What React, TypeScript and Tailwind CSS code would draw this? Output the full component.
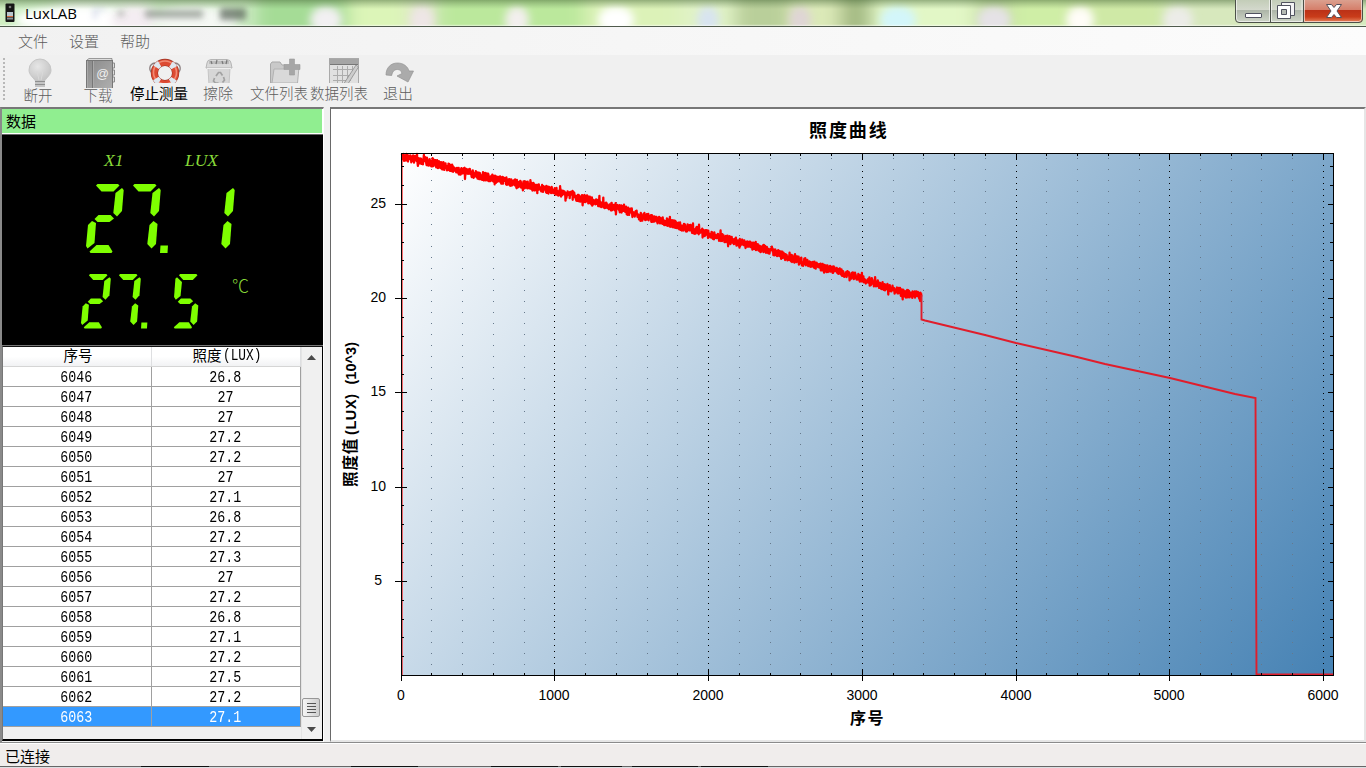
import React from "react";

const CJK = "font-['Liberation_Sans','Noto_Sans_CJK_SC',sans-serif]";

/* ---------- Title bar ---------- */

type Blob = { x: number; w: number; c: string };

const GLASS_BANDS: Blob[] = [
  { x: 0, w: 60, c: "#cdeec3" },
  { x: 60, w: 110, c: "#e4f4df" },
  { x: 150, w: 105, c: "#cfecc6" },
  { x: 255, w: 100, c: "#a5dc96" },
  { x: 348, w: 60, c: "#dcf5b8" },
  { x: 408, w: 32, c: "#dfe6c8" },
  { x: 436, w: 150, c: "#bbe89c" },
  { x: 585, w: 100, c: "#dcf2b8" },
  { x: 680, w: 60, c: "#e0f2c6" },
  { x: 735, w: 55, c: "#b9cf9a" },
  { x: 790, w: 55, c: "#dbe9b8" },
  { x: 840, w: 35, c: "#a5bb84" },
  { x: 872, w: 110, c: "#e2f7c6" },
  { x: 975, w: 40, c: "#c8dfa6" },
  { x: 1012, w: 55, c: "#cfeea6" },
  { x: 1067, w: 100, c: "#cfe9a6" },
  { x: 1165, w: 201, c: "#d7e8bd" },
];

const GLASS_SPOTS: Blob[] = [
  { x: 75, w: 60, c: "#ffffff" },
  { x: 135, w: 24, c: "#f4edf2" },
  { x: 195, w: 44, c: "#f5f8f4" },
  { x: 326, w: 16, c: "#f2f0f2" },
  { x: 422, w: 12, c: "#eee6e6" },
  { x: 517, w: 12, c: "#f3efee" },
  { x: 616, w: 18, c: "#ffffff" },
  { x: 708, w: 11, c: "#d8e4f0" },
  { x: 800, w: 11, c: "#dfd5d5" },
  { x: 898, w: 18, c: "#d3f6fa" },
  { x: 994, w: 17, c: "#e5e2e6" },
  { x: 1080, w: 14, c: "#fffdf8" },
  { x: 1178, w: 15, c: "#ecece8" },
];

function GlassBackdrop() {
  return (
    <svg className="absolute inset-0" width="1366" height="26" viewBox="0 0 1366 26">
      <defs>
        <filter id="soft" x="-5%" y="-100%" width="110%" height="300%">
          <feGaussianBlur stdDeviation="9 2" />
        </filter>
        <filter id="spot" x="-50%" y="-50%" width="200%" height="200%">
          <feGaussianBlur stdDeviation="4" />
        </filter>
        <filter id="ghost" x="-20%" y="-50%" width="140%" height="200%">
          <feGaussianBlur stdDeviation="3" />
        </filter>
        <linearGradient id="shade" x1="0" y1="0" x2="0" y2="1">
          <stop offset="0" stopColor="#4a6a3a" stopOpacity="0.5" />
          <stop offset="0.35" stopColor="#6a8a5a" stopOpacity="0" />
          <stop offset="0.93" stopColor="#ffffff" stopOpacity="0" />
          <stop offset="1" stopColor="#ffffff" stopOpacity="0.6" />
        </linearGradient>
      </defs>
      <rect width="1366" height="26" fill="#d4edc0" />
      <g filter="url(#soft)">
        {GLASS_BANDS.map((b) => (
          <rect key={b.x} x={b.x} y={-8} width={b.w} height={42} fill={b.c} />
        ))}
      </g>
      <g filter="url(#spot)">
        {GLASS_SPOTS.map((b) => (
          <ellipse key={b.x} cx={b.x} cy={20} rx={b.w} ry={14} fill={b.c} />
        ))}
      </g>
      <g filter="url(#ghost)" fill="#555f55">
        <path d="M93 8h12v3h-8v8h-4z" opacity="0.3" fill="#8090c0" />
        <rect x="118" y="11" width="6" height="5" opacity="0.45" />
        <rect x="145" y="10" width="58" height="8" opacity="0.5" />
        <rect x="220" y="8" width="26" height="12" opacity="0.7" />
      </g>
      <rect width="1366" height="26" fill="url(#shade)" />
    </svg>
  );
}

function WindowButtons() {
  return (
    <svg className="absolute left-[1235px] top-0" width="129" height="24" viewBox="0 0 129 24">
      <defs>
        <linearGradient id="btn" x1="0" y1="0" x2="0" y2="1">
          <stop offset="0" stopColor="#c3cdb8" />
          <stop offset="0.43" stopColor="#d3d8cc" />
          <stop offset="0.46" stopColor="#adb5a8" />
          <stop offset="1" stopColor="#cfd6c8" />
        </linearGradient>
        <linearGradient id="cls" x1="0" y1="0" x2="0" y2="1">
          <stop offset="0" stopColor="#dba08f" />
          <stop offset="0.43" stopColor="#d57e6a" />
          <stop offset="0.46" stopColor="#bb3117" />
          <stop offset="0.75" stopColor="#c93c1a" />
          <stop offset="1" stopColor="#e88a62" />
        </linearGradient>
      </defs>
      <path d="M.5 0V19q0 3.500 3.500 3.500H124q3.500 0 3.500-3.500V0z" fill="url(#btn)" />
      <path d="M68 0V22.500H124q3.500 0 3.500-3.500V0z" fill="url(#cls)" />
      <path d="M1.500 0V18.500q0 3 3 3H34.500V0M36.500 0V21.500H67V0M69.500 0V21.500H123.500q3 0 3-3V0" fill="none" stroke="#fff" strokeOpacity="0.6" />
      <path d="M.5 0V19q0 3.500 3.500 3.500H124q3.500 0 3.500-3.500V0M35.500 0V22M68.500 0V22" fill="none" stroke="#4c5149" />
      <rect x="10.500" y="13.500" width="16" height="4" rx="0.500" fill="#fff" stroke="#50525f" />
      <path d="M46.500 2.500h13v13h-13z" fill="#f4f4f4" stroke="#50525f" />
      <path d="M42.500 5.500h13v13h-13z" fill="#fff" stroke="#50525f" />
      <path d="M46.500 9.500h5v5h-5z" fill="#b5bab4" stroke="#50525f" />
      <path d="M91.500 4.500h5l2.500 3 2.500-3h5l-4.500 6.500 4.500 6.500h-5l-2.500-3-2.500 3h-5l4.500-6.500z" fill="#fff" stroke="#55505a" />
    </svg>
  );
}

function TitleBar() {
  return (
    <header className="relative flex h-[27px] shrink-0 items-center overflow-hidden border-b border-[#4f5a4c]">
      <GlassBackdrop />
      <svg className="relative ml-[5px]" width="11" height="20" viewBox="0 0 11 20">
        <rect x="0.500" y="0.500" width="9" height="18.500" rx="1" fill="#161616" />
        <circle cx="5" cy="4" r="1.300" fill="#777" />
        <rect x="2" y="9" width="6" height="4" fill="#b9c6cd" />
        <rect x="2" y="13" width="6" height="1" fill="#d5683c" />
        <rect x="2" y="14.500" width="6" height="2" fill="#8a9298" />
      </svg>
      <span className="relative ml-[9px] text-[15px] text-black font-['Open_Sans','Noto_Sans',sans-serif]">LuxLAB</span>
      <WindowButtons />
    </header>
  );
}

/* ---------- Toolbar ---------- */

function BulbIcon() {
  return (
    <svg width="24" height="30" viewBox="0 0 24 30">
      <defs>
        <radialGradient id="bulb" cx="0.4" cy="0.35" r="0.7">
          <stop offset="0" stopColor="#e6e6e6" />
          <stop offset="1" stopColor="#c3c3c3" />
        </radialGradient>
      </defs>
      <path d="M12 1a11 11 0 0 0-11 11c0 5 4 7 6 10.500h10C19 19 23 17 23 12A11 11 0 0 0 12 1z" fill="url(#bulb)" stroke="#c6c6c6" />
      <path d="M7 22h10v7H7z" fill="#c4c4c4" />
      <path d="M7 23.500h10M7 26.500h10" stroke="#8f8f8f" />
      <path d="M9 13l2 9M15 13l-2 9" stroke="#d9d9d9" fill="none" />
    </svg>
  );
}

function BookIcon() {
  return (
    <svg width="30" height="30" viewBox="0 0 30 30">
      <defs>
        <linearGradient id="book" x1="0" y1="0" x2="1" y2="1">
          <stop offset="0" stopColor="#8a8a8a" />
          <stop offset="1" stopColor="#b0b0b0" />
        </linearGradient>
      </defs>
      <path d="M26 5h2.500v5H26zM26 12h2.500v5H26zM26 19h2.500v5H26z" fill="#ddd" stroke="#8a8a8a" />
      <path d="M1 2l2-1.500h23V3H1z" fill="#ddd" stroke="#777" strokeWidth="0.700" />
      <rect x="0.500" y="2.500" width="26" height="30" fill="url(#book)" stroke="#777" />
      <path d="M6.500 3v27" stroke="#777" />
      <path d="M1.500 3v27M7.500 3v27" stroke="#a9a9a9" />
      <text x="16.500" y="20" fontSize="12.500" textAnchor="middle" fill="#f0f0f0" fontFamily="Liberation Sans">@</text>
    </svg>
  );
}

function LifebuoyIcon() {
  return (
    <svg width="34" height="25" viewBox="0 0 34 25">
      <path d="M5 16C0 12 1 6 7 5M29 16c5-4 4-10-2-11" fill="none" stroke="#8b7f80" strokeWidth="1.300" />
      <circle cx="17" cy="15" r="10.600" fill="none" stroke="#9c3324" strokeWidth="7.200" />
      <circle cx="17" cy="15" r="10.600" fill="none" stroke="#dd4a32" strokeWidth="6" />
      <circle cx="17" cy="14.500" r="11.500" fill="none" stroke="#f08a74" strokeWidth="1.600" />
      <circle
        cx="17"
        cy="15"
        r="10.600"
        fill="none"
        stroke="#dfe8f0"
        strokeWidth="6.600"
        strokeDasharray="4.800 11.850"
        strokeDashoffset="-5.920"
      />
    </svg>
  );
}

function BinIcon() {
  return (
    <svg width="28" height="25" viewBox="0 0 28 25">
      <path d="M2 5q0-3 4-3.500h16q4 .5 4 3.500l1 5H1z" fill="#d9d9d9" stroke="#b5b5b5" />
      <path d="M4 3h20v3H4z" fill="#bdbdbd" />
      <path d="M6 3l1 3M12 2l-1 4M17 3l1 3M22 2l-1 4" stroke="#777" strokeWidth="1.200" />
      <path d="M3 10h22l-1 17H4z" fill="#d6d6d6" stroke="#c4c4c4" />
      <path d="M2 10.500h24" stroke="#efefef" />
      <path d="M11 18l2.500-3.500h2l2 3M18.500 19l1 3-2 2.500M9.500 20l-1 3 2 2h3" fill="none" stroke="#a2a2a2" strokeWidth="1.700" />
    </svg>
  );
}

function FolderPlusIcon() {
  return (
    <svg width="32" height="25" viewBox="0 0 32 25">
      <path d="M1.500 25V6l1.500-2h8l2 3h13v18z" fill="#c9c9c9" stroke="#a9a9a9" />
      <path d="M3 25l2-14h10l2-2h13l-1.500 16z" fill="#d9d9d9" stroke="#b2b2b2" />
      <path d="M20.500 1h5v5.500H31v5h-5.500V17h-5v-5.500H15v-5h5.500z" fill="#a6a6a6" stroke="#9a9a9a" strokeWidth="0.600" />
    </svg>
  );
}

function SheetIcon() {
  return (
    <svg width="31" height="25" viewBox="0 0 31 25">
      <rect x="0.500" y="0.500" width="29" height="28" fill="#e0e0e0" stroke="#aaa" />
      <rect x="0" y="1" width="30" height="5" fill="#a5a5a5" />
      <path d="M1 6.500h28" stroke="#777" />
      <path d="M4 11.500h22M4 17.500h20M4 22.500h18M8.500 8v17M13.500 8v17M18.500 8v17M23.500 8v10" stroke="#acacac" />
      <path d="M14 27L27 7l2.500 2L17 29z" fill="#cdcdcd" stroke="#8d8d8d" strokeWidth="0.800" />
    </svg>
  );
}

function RedoIcon() {
  return (
    <svg width="30" height="25" viewBox="0 0 30 25">
      <path
        d="M1 17C1 9.500 6 5 12.500 5c6.500 0 10.500 4 11.500 8h4.500L23 24 12 18l5-2.500c-.7-2.500-2-4-4.500-4-3.200 0-5.200 2-5.800 6z"
        fill="#ababab"
        stroke="#949494"
        strokeWidth="0.700"
      />
    </svg>
  );
}

type Tool = { label: string; icon: React.ReactNode; box: string; iconPad: string; labelClass: string };

const TOOLS: Tool[] = [
  { label: "断开", icon: <BulbIcon />, box: "ml-[17px] w-[32px]", iconPad: "pl-[3px]", labelClass: "mt-[-3px] text-[14.5px] text-[#5c5c5c] font-light" },
  { label: "下载", icon: <BookIcon />, box: "ml-[28px] w-[32px]", iconPad: "pl-[5px]", labelClass: "mt-[-3px] text-[14.5px] text-[#5c5c5c] font-light" },
  { label: "停止测量", icon: <LifebuoyIcon />, box: "ml-[15px] w-[60px]", iconPad: "pl-[11px]", labelClass: "text-[14.5px] text-black font-normal" },
  { label: "擦除", icon: <BinIcon />, box: "ml-[13px] w-[32px]", iconPad: "pl-[2px]", labelClass: "text-[15px] text-[#5c5c5c] font-light" },
  { label: "文件列表", icon: <FolderPlusIcon />, box: "ml-[15px] w-[60px]", iconPad: "pl-[12px]", labelClass: "text-[14.5px] text-[#5c5c5c] font-light" },
  { label: "数据列表", icon: <SheetIcon />, box: "w-[60px]", iconPad: "pl-[11px]", labelClass: "text-[14.5px] text-[#5c5c5c] font-light" },
  { label: "退出", icon: <RedoIcon />, box: "ml-[13px] w-[32px]", iconPad: "pl-[3px]", labelClass: "text-[15px] text-[#5c5c5c] font-light" },
];

function Toolbar() {
  return (
    <div className="flex h-[52px] shrink-0 bg-[#f0f0f0] pt-[3px]">
      <div className="ml-[3px] h-[44px] w-[2px] bg-[repeating-linear-gradient(to_bottom,#b8b8b8_0_2px,transparent_2px_4px)]" />
      {TOOLS.map((t) => (
        <button key={t.label} className={`flex flex-col items-center whitespace-nowrap ${t.box}`}>
          <span className={`flex shrink-0 justify-center ${t.iconPad}`}>{t.icon}</span>
          <span className={`leading-[22px] ${t.labelClass}`}>{t.label}</span>
        </button>
      ))}
    </div>
  );
}

/* ---------- Seven segment read-out ---------- */

const SEGMENTS: Record<string, string> = {
  a: "10,1.500 11.500,0 32,0 33.500,1.500 27.500,7.500 15.500,7.500",
  b: "29.500,9 36,4 37.700,6 36,27 31,32.500 27.300,29",
  c: "26.500,41 30.500,37 34.500,40 33,60 28.500,64.500 24.300,60",
  d: "3.500,67.500 10.500,61 22.500,61 26.500,67.500 25.500,69 4.500,69",
  e: "6,37 10,39 8.500,59 1.500,64.500 0,62 2,41",
  f: "7.500,4 13.800,10 12,28 6,32.500 3.800,29 5.500,6",
  g: "8.500,35 12.500,31 24.500,31 28,34.500 23.500,38 11.500,38",
  p: "0.500,61.500 8,61.500 7.500,69 0,69",
};

const LIT: Record<string, string> = { "1": "bc", "2": "abged", "5": "afgcd", "7": "abc", ".": "p" };

function SegmentDisplay({ value, scale, pitch }: { value: string; scale: number; pitch: number }) {
  return (
    <svg role="img" aria-label={value} width={150 * scale} height={69 * scale} viewBox="0 0 150 69" fill="#7fff00">
      {value.split("").map((ch, i) => (
        <g key={i} transform={`translate(${i * pitch} 0)`}>
          {(LIT[ch] || "").split("").map((s) => (
            <polygon key={s} points={SEGMENTS[s]} />
          ))}
        </g>
      ))}
    </svg>
  );
}

function ReadOut() {
  return (
    <div className="h-[212px] shrink-0 border-y border-t-[#666] border-b-[#777] bg-black">
      <div className="flex h-[49px] pt-[15px] text-[17.5px] leading-[20px] text-[#86d838] italic font-['Liberation_Serif',serif]">
        <span className="ml-[102px] w-[81px]">X1</span>
        <span>LUX</span>
      </div>
      <div className="ml-[83.500px] flex h-[90px]">
        <SegmentDisplay value="27.1" scale={1} pitch={37} />
      </div>
      <div className="ml-[78.500px] flex">
        <SegmentDisplay value="27.5" scale={0.79} pitch={38} />
        <span className="ml-[33px] text-[17px] leading-[22px] text-[#86d838] font-light font-['Noto_Sans_CJK_SC',sans-serif]">℃</span>
      </div>
    </div>
  );
}

/* ---------- Table ---------- */

const ROWS: [string, string][] = [
  ["6046", "26.8"],
  ["6047", "27"],
  ["6048", "27"],
  ["6049", "27.2"],
  ["6050", "27.2"],
  ["6051", "27"],
  ["6052", "27.1"],
  ["6053", "26.8"],
  ["6054", "27.2"],
  ["6055", "27.3"],
  ["6056", "27"],
  ["6057", "27.2"],
  ["6058", "26.8"],
  ["6059", "27.1"],
  ["6060", "27.2"],
  ["6061", "27.5"],
  ["6062", "27.2"],
  ["6063", "27.1"],
];

function Cell({ children }: { children: string }) {
  return (
    <div className="flex h-[20px] justify-center overflow-hidden border-r border-b border-[#a0a0a0] pr-px">
      <span className="inline-block scale-x-[0.833] text-[16px] leading-[22px] font-['Liberation_Mono',monospace]">{children}</span>
    </div>
  );
}

function DataTable() {
  return (
    <div className="flex flex-1 border border-t-[#111] border-r-black border-b-2 border-b-black border-l-[#777] bg-[#f0f0f0]">
      <div className="w-[298px]">
        <div className="grid h-[20px] grid-cols-[149px_149px] border-b border-[#d5d5d5] bg-gradient-to-b from-white from-50% to-[#f1f2f4] text-[14.5px] leading-[19px] text-black">
          <div className="border-r border-[#dedfe1] pl-[2px] text-center">序号</div>
          <div className="flex justify-center border-r border-[#dedfe1] pl-[3px]">
            照度
            <span className="ml-px inline-block w-[40px] origin-left scale-x-[0.8] text-[16px] font-['Liberation_Mono',monospace]">(LUX)</span>
          </div>
        </div>
        {ROWS.map(([n, v], i) => (
          <div
            key={n}
            className={`grid h-[20px] grid-cols-[149px_149px] ${i === ROWS.length - 1 ? "bg-[#3399ff] text-white" : "bg-white text-black"}`}
          >
            <Cell>{n}</Cell>
            <Cell>{v}</Cell>
          </div>
        ))}
      </div>
      <div className="flex flex-1 flex-col items-center justify-between border-l border-[#e4e4e4] bg-[#f0f0f0] pt-[8px] pr-[2px] pb-[7px]">
        <svg width="9" height="5" viewBox="0 0 9 5">
          <path d="M0 5L4.500 0 9 5z" fill="#4a4a4a" />
        </svg>
        <div className="flex flex-col items-center gap-[10px]">
          <div className="flex h-[19px] w-[18px] flex-col items-center justify-center gap-[2px] rounded-[2px] border border-[#979797] bg-gradient-to-r from-[#f5f5f5] to-[#cfcfcf]">
            <i className="h-px w-[9px] bg-[#555]" />
            <i className="h-px w-[9px] bg-[#555]" />
            <i className="h-px w-[9px] bg-[#555]" />
            <i className="h-px w-[9px] bg-[#555]" />
          </div>
          <svg width="9" height="5" viewBox="0 0 9 5">
            <path d="M0 0H9L4.500 5z" fill="#4a4a4a" />
          </svg>
        </div>
      </div>
    </div>
  );
}

/* ---------- Chart (user space: origin at panel's inner corner, 331 x 109) ---------- */

const PX = 401.5;
const PY = 153.5;
const PR = 1333.5;
const PB = 675.5;
const xOf = (v: number) => Math.round(400.75 + v * 0.1537) + 0.5;
const yOf = (v: number) => Math.round(PB - v * 18.85 - 0.4) + 0.5;

const TREND: [number, number][] = [
  [401.5, 156.5],
  [430, 162],
  [460, 171],
  [500, 180],
  [554, 191],
  [600, 203],
  [650, 217.5],
  [708, 234],
  [760, 248],
  [800, 261],
  [862, 278.5],
  [905, 293.5],
  [921.5, 295.5],
];

function noisyTrace() {
  let seed = 20117;
  const rnd = () => {
    seed = (seed * 16807) % 2147483647;
    return seed / 2147483647;
  };
  const pts: string[] = [];
  for (let x = 402; x <= 921.5; x += 0.3) {
    let k = 0;
    while (k < TREND.length - 2 && TREND[k + 1][0] < x) k++;
    const [x0, y0] = TREND[k];
    const [x1, y1] = TREND[k + 1];
    const y = y0 + ((y1 - y0) * (x - x0)) / (x1 - x0);
    const spread = rnd() > 0.92 ? 7 : 4;
    const n = Math.max(154, y + (rnd() * 2 - 1) * spread);
    pts.push(`${x.toFixed(1)},${n.toFixed(1)}`);
  }
  return pts.join(" ");
}

const NOISE = noisyTrace();

function Chart() {
  const minorX = Array.from({ length: 31 }, (_, i) => i * 200).filter((v) => v % 1000 !== 0);
  const majorX = [0, 1000, 2000, 3000, 4000, 5000, 6000];
  const ys = Array.from({ length: 27 }, (_, i) => i + 1);
  return (
    <svg className={`block ${CJK}`} width="1033" height="631" viewBox="331 109 1033 631" fill="#000">
      <defs>
        <linearGradient id="plot" gradientUnits="userSpaceOnUse" x1="401" y1="153" x2="1240" y2="795">
          <stop offset="0" stopColor="#ffffff" />
          <stop offset="1" stopColor="#4682b4" />
        </linearGradient>
      </defs>
      <rect x={PX} y={PY} width={PR - PX} height={PB - PY} fill="url(#plot)" />
      <g shapeRendering="crispEdges" fill="none" strokeWidth="1">
        {minorX.map((v) => (
          <path key={v} d={`M${xOf(v)} 158V${PB}`} stroke="#66798c" strokeDasharray="1 10" />
        ))}
        {majorX.slice(1).map((v) => (
          <path key={v} d={`M${xOf(v)} 165V${PB}`} stroke="#000" strokeDasharray="1 5" />
        ))}
      </g>
      <path d={`M402.500 ${PB}V156`} stroke="#ff0000" strokeOpacity="0.55" strokeWidth="1" fill="none" />
      <polyline points={NOISE} fill="none" stroke="#ff0000" strokeWidth="2.300" strokeLinejoin="round" />
      <path
        d="M921.500 295V319.500L925 320.500 985 335 1016 343 1075 356.500 1105 364 1170 378 1235 394 1255.500 398 1256.500 674.500H1333"
        fill="none"
        stroke="#e01d2b"
        strokeWidth="1.900"
      />
      <g shapeRendering="crispEdges" stroke="#000" strokeWidth="1" fill="none">
        <rect x={PX} y={PY} width={PR - PX} height={PB - PY} />
        {majorX.map((v) => (
          <path key={v} d={`M${xOf(v)} 670V681M${xOf(v)} 153V160`} />
        ))}
        {minorX.map((v) => (
          <path key={v} d={`M${xOf(v)} 673V675M${xOf(v)} 153V156`} />
        ))}
        {ys.map((v) => (
          <path key={v} d={v % 5 ? `M401 ${yOf(v)}H404M1330 ${yOf(v)}H1333` : `M395 ${yOf(v)}H407M1328 ${yOf(v)}H1333`} />
        ))}
      </g>
      <g fontSize="14">
        {majorX.map((v) => (
          <text key={v} x={v === 0 ? 401 : xOf(v) - 0.5} y="700" textAnchor="middle">
            {v}
          </text>
        ))}
        {[5, 10, 15, 20, 25].map((v) => (
          <text key={v} x={v === 5 ? 382 : 386} y={yOf(v) + 3.5} textAnchor="end">
            {v}
          </text>
        ))}
      </g>
      <text x="809" y="137" fontSize="18" fontWeight="bold" letterSpacing="1.900">
        照度曲线
      </text>
      <text x="850" y="723.500" fontSize="16" fontWeight="bold" letterSpacing="1.500">
        序号
      </text>
      <g transform="translate(356 487) rotate(-90)" fontWeight="bold">
        <text fontSize="15.500" letterSpacing="0.900">
          照度值
        </text>
        <text x="52" fontSize="14.500" textLength="41">
          (LUX)
        </text>
        <text x="102.500" fontSize="14.500" textLength="42.500">
          (10^3)
        </text>
      </g>
    </svg>
  );
}

/* ---------- Window ---------- */

const TASK_EDGES = [
  { pad: 141, w: 68 },
  { pad: 142, w: 67 },
  { pad: 73, w: 67 },
  { pad: 3, w: 61 },
  { pad: 10, w: 66 },
  { pad: 3, w: 67 },
];

export default function App() {
  return (
    <div className={`flex h-[768px] w-[1366px] flex-col overflow-hidden bg-[#f0f0f0] ${CJK}`}>
      <TitleBar />
      <nav className="flex h-[28px] shrink-0 gap-[21px] bg-gradient-to-r from-[#f1f1f1] to-[#fcfcfc] pl-[18px] text-[15px] leading-[29px] font-light text-[#5c5c5c]">
        <span>文件</span>
        <span>设置</span>
        <span>帮助</span>
      </nav>
      <Toolbar />
      <main className="flex h-[635px] shrink-0">
        <section className="flex w-[324px] shrink-0 flex-col border-t-2 border-r border-l-2 border-t-[#777] border-r-white border-l-[#8a8a8a] pb-px">
          <div className="h-[25px] shrink-0 border-r border-b border-white bg-[#90ee90] pl-[4px] text-[15px] leading-[25px] text-black">数据</div>
          <ReadOut />
          <DataTable />
        </section>
        <section className="ml-[6px] flex-1 border-t-2 border-r-2 border-b-2 border-l border-t-[#777] border-r-[#e6e6e6] border-b-[#e6e6e6] border-l-[#696969] bg-white">
          <Chart />
        </section>
      </main>
      <footer className="flex h-[26px] shrink-0 flex-col justify-between border-t border-[#8b8b8b] bg-[#f0edec]">
        <div className="h-px border-t border-white pl-[5px] text-[15px] leading-[25px] text-black">已连接</div>
        <div className="flex h-[2px] border-t border-[#666] bg-[#dcdfe2]">
          {TASK_EDGES.map((e, i) => (
            <i key={i} className="-mt-px h-px shrink-0 bg-[#111]" style={{ marginLeft: e.pad, width: e.w }} />
          ))}
        </div>
      </footer>
    </div>
  );
}
